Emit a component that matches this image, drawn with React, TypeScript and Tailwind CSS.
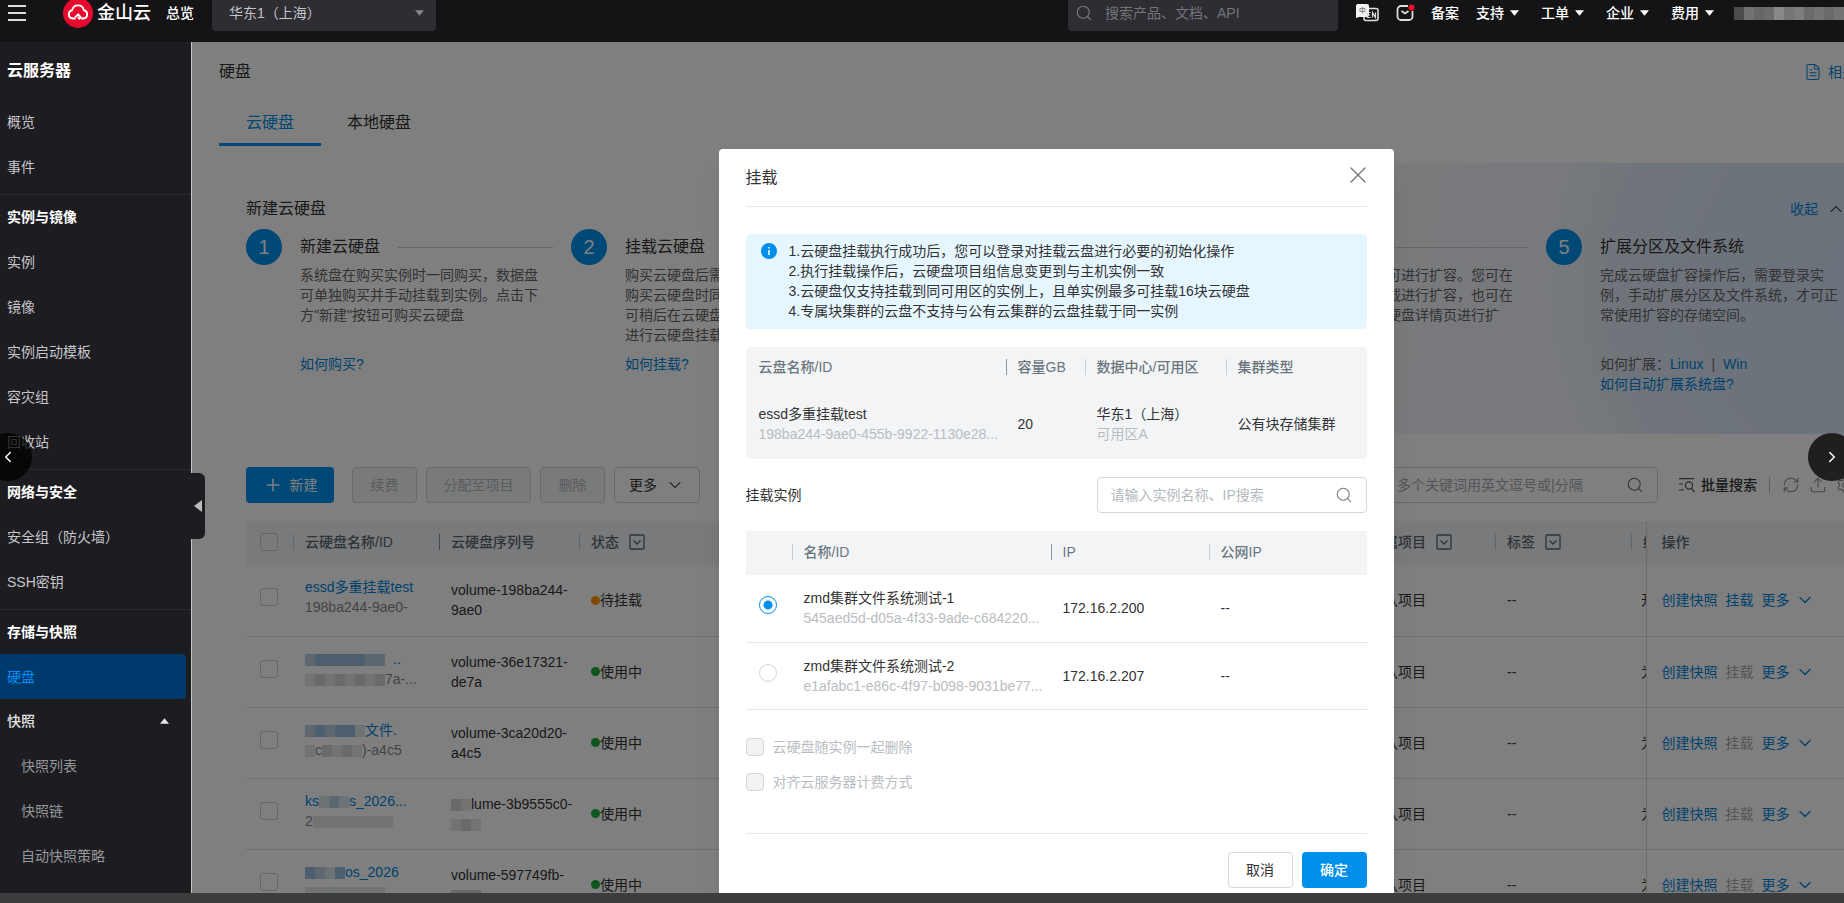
import { useState } from "react";
import type { ReactNode } from "react";
import {
  ChevronDown,
  ChevronLeft,
  ChevronRight,
  ChevronUp,
  FileText,
  Plus,
  Search,
  Upload,
  RefreshCw,
  Settings,
  X,
} from "lucide-react";

const menu = [
  { title: "实例与镜像", items: ["实例", "镜像", "实例启动模板", "容灾组", "回收站"] },
  { title: "网络与安全", items: ["安全组（防火墙）", "SSH密钥"] },
  { title: "存储与快照", items: ["硬盘"] },
];

const steps: { title: string; lines: string[]; links?: ReactNode }[] = [
  {
    title: "新建云硬盘",
    lines: ["系统盘在购买实例时一同购买，数据盘", "可单独购买并手动挂载到实例。点击下", "方\"新建\"按钮可购买云硬盘"],
    links: <a href="#" className="text-[#0084dc]">如何购买?</a>,
  },
  {
    title: "挂载云硬盘",
    lines: ["购买云硬盘后需要挂载", "购买云硬盘时同时选择", "可稍后在云硬盘列表页", "进行云硬盘挂载操作"],
    links: <a href="#" className="text-[#0084dc]">如何挂载?</a>,
  },
  { title: "初始化", lines: [] },
  {
    title: "扩容",
    lines: ["若硬盘空间不足，可进行扩容。您可在", "云硬盘列表选择卸载进行扩容，也可在", "快照列表页或者云硬盘详情页进行扩"],
  },
  {
    title: "扩展分区及文件系统",
    lines: ["完成云硬盘扩容操作后，需要登录实", "例，手动扩展分区及文件系统，才可正", "常使用扩容的存储空间。"],
    links: (
      <>
        <div>
          如何扩展：<a href="#" className="text-[#0084dc]">Linux</a>
          <span className="mx-2">|</span>
          <a href="#" className="text-[#0084dc]">Win</a>
        </div>
        <a href="#" className="text-[#0084dc]">如何自动扩展系统盘?</a>
      </>
    ),
  },
];

// Masked parts of a name, one coloured block per entry
function Mosaic({ blocks }: { blocks: string[] }) {
  return (
    <span className="inline-flex align-middle">
      {blocks.map((b, i) => (
        <i key={i} className={`block h-3 w-[10px] ${b}`} />
      ))}
    </span>
  );
}

const B1 = "bg-[#b9cfe0]";
const B2 = "bg-[#9abfdd]";
const B3 = "bg-[#dbe4eb]";
const G1 = "bg-[#e6e6e6]";
const G2 = "bg-[#d4d4d4]";

const disks = [
  {
    name: "essd多重挂载test",
    id: "198ba244-9ae0-",
    serial: ["volume-198ba244-", "9ae0"],
    status: "待挂载",
    cut: "开",
  },
  {
    name: <><Mosaic blocks={[B1, B2, B2, B2, B2, B2, B1, B1]} /><span className="ml-2">..</span></>,
    id: <><Mosaic blocks={[G1, G2, G1, G2, G1, G2, G1, G2]} />7a-...</>,
    serial: ["volume-36e17321-", "de7a"],
    status: "使用中",
    cut: "为",
  },
  {
    name: <><Mosaic blocks={[B1, B2, B1, B2, B2, B3]} />文件.</>,
    id: <><Mosaic blocks={[G1]} />c<Mosaic blocks={[G2, G1, G2, G1]} />)-a4c5</>,
    serial: ["volume-3ca20d20-", "a4c5"],
    status: "使用中",
    cut: "为",
  },
  {
    name: <>ks<Mosaic blocks={[B3, B1, B3]} />s_2026...</>,
    id: <>2<Mosaic blocks={[G1, G1, G1, G1, G1, G1, G1, G1]} /></>,
    serial: [<><Mosaic blocks={[G2, G1]} />lume-3b9555c0-</>, <Mosaic blocks={[G1, G2, G1]} />],
    status: "使用中",
    cut: "为",
  },
  {
    name: <><Mosaic blocks={[B2, B1, B3, B2]} />os_2026</>,
    id: <Mosaic blocks={[G1, G1, B3, G1, G1, G1, G1, G1]} />,
    serial: ["volume-597749fb-", <Mosaic blocks={[G2, G2, G2]} />],
    status: "使用中",
    cut: "为",
  },
];

const instances = [
  { name: "zmd集群文件系统测试-1", id: "545aed5d-d05a-4f33-9ade-c684220...", ip: "172.16.2.200" },
  { name: "zmd集群文件系统测试-2", id: "e1afabc1-e86c-4f97-b098-9031be77...", ip: "172.16.2.207" },
];

function Caret({ className = "" }: { className?: string }) {
  return (
    <svg viewBox="0 0 10 6" className={`h-[6px] w-[9px] ${className}`} fill="currentColor">
      <path d="M0 0h10L5 6z" />
    </svg>
  );
}

function FilterIcon() {
  return (
    <svg viewBox="0 0 16 16" className="ml-[10px] inline size-4 align-middle" fill="none" stroke="#5c6670" strokeWidth="1.3">
      <rect x="1" y="1" width="14" height="14" rx="1" />
      <path d="M4.5 6.5 8 10l3.5-3.5" />
    </svg>
  );
}

function Th({ children, first, strong }: { children?: ReactNode; first?: boolean; strong?: boolean }) {
  return (
    <th className="whitespace-nowrap p-0 pb-[2px] text-left font-medium">
      <div className={first ? "pl-[13px]" : `flex h-4 items-center border-l pl-[11px] ${strong ? "border-[#8c959c]" : "border-[#c9ced3]"}`}>
        {children}
      </div>
    </th>
  );
}

function TopBar() {
  return (
    <header className="h-[42px] shrink-0 overflow-hidden bg-[#141416] text-sm text-white">
      <div className="flex h-[26px] items-center">
        <button aria-label="菜单" className="ml-2 flex w-[18px] flex-col gap-[5px]">
          <i className="h-[2px] w-full bg-white/85" />
          <i className="h-[2px] w-full bg-white/85" />
          <i className="h-[2px] w-full bg-white/85" />
        </button>
        <a href="#" className="ml-[37px] flex items-center gap-1">
          <svg viewBox="0 0 30 30" className="size-[30px]">
            <circle cx="15" cy="15" r="15" fill="#e60a2e" />
            <path
              d="M12.5 20.5H9.8a4.2 4.2 0 0 1-.6-8.3 5.9 5.9 0 0 1 11.6 0 4.2 4.2 0 0 1-.6 8.3h-1.4l-3.6-4.2-3.2 3.2M17 21.5l-2-2.3"
              fill="none"
              stroke="#fff"
              strokeWidth="1.9"
              strokeLinejoin="round"
            />
          </svg>
          <span className="text-lg font-medium">金山云</span>
        </a>
        <a href="#" className="ml-[15px] font-medium">总览</a>
        <div className="relative ml-[18px] w-56">
          <select aria-label="地域" className="h-9 w-full appearance-none rounded bg-[#2d2d33] px-[17px] text-sm text-[#c4c4c8]">
            <option>华东1（上海）</option>
          </select>
          <Caret className="pointer-events-none absolute right-3 top-[15px] text-[#85858b]" />
        </div>
        <div className="relative ml-auto w-[270px]">
          <Search className="absolute left-[7px] top-[9px] size-[18px] text-[#74747a]" strokeWidth={1.5} />
          <input
            aria-label="搜索"
            placeholder="搜索产品、文档、API"
            className="h-9 w-full rounded bg-[#2d2d33] pl-[37px] text-sm placeholder:text-[#74747a]"
          />
        </div>
        <button aria-label="语言" className="ml-[18px]">
          <svg viewBox="0 0 23 18" className="h-[18px] w-[23px]">
            <rect x="8" y="4.500" width="14" height="12" rx="2" fill="#141416" stroke="#ddd" strokeWidth="1.6" />
            <path d="M2 0h9a2 2 0 0 1 2 2v9a2 2 0 0 1-2 2H3l-3 1V2a2 2 0 0 1 2-2z" fill="#f2f2f2" />
            <path d="M4 4.500h5v3H4zM6.500 3v6.500" fill="none" stroke="#888" />
            <path d="M14.500 8.500h-3v5h3M11.500 11h2.500M16.500 13.500v-5l3 5v-5" fill="none" stroke="#ddd" strokeWidth="1.200" />
          </svg>
        </button>
        <button aria-label="消息" className="ml-[17px]">
          <svg viewBox="0 0 19 18" className="h-[18px] w-[19px]">
            <path d="M12 2H5a3.500 3.500 0 0 0-3.500 3.500v7A3.500 3.500 0 0 0 5 16h8a3.500 3.500 0 0 0 3.500-3.500V7" fill="none" stroke="#ddd" strokeWidth="1.800" />
            <path d="m5.500 7 3.500 2.500L12.500 7" fill="none" stroke="#ddd" strokeWidth="1.800" />
            <circle cx="15.500" cy="3.500" r="3" fill="#f5101f" />
          </svg>
        </button>
        <a href="#" className="ml-4 font-medium">备案</a>
        {["支持", "工单", "企业", "费用"].map((t, i) => (
          <button key={t} className={`flex items-center gap-[6px] font-medium ${i ? "ml-[22px]" : "ml-[17px]"}`}>
            {t}
            <Caret />
          </button>
        ))}
        <div className="ml-5 flex opacity-80">
          {["bg-[#5b5b5e]", "bg-[#8a8a8c]", "bg-[#7c7c7f]", "bg-[#838385]", "bg-[#a5a5a7]", "bg-[#8f8f92]", "bg-[#98989a]", "bg-[#808083]", "bg-[#8c8c8e]", "bg-[#808083]", "bg-[#8c8c8e]"].map((c, i) => (
            <i key={i} className={`h-[13px] w-[10px] ${c}`} />
          ))}
        </div>
      </div>
    </header>
  );
}

function Sidebar() {
  const item = "flex h-[45px] items-center pl-[7px] text-[#c6c6ca]";
  return (
    <aside className="relative w-[191px] shrink-0 bg-[#1c1c21] text-sm">
      <h2 className="flex h-[57px] items-center pl-[7px] text-base font-bold text-white">云服务器</h2>
      <a href="#" className={item}>概览</a>
      <a href="#" className={item}>事件</a>
      {menu.map((group) => (
        <div key={group.title} className="mt-[5px] border-t border-[#2a2a2f]">
          <h3 className="flex h-11 items-center pl-[7px] font-bold text-white">{group.title}</h3>
          {group.items.map((name) =>
            name === "硬盘" ? (
              <a key={name} href="#" className="mr-[5px] flex h-[45px] items-center rounded-r bg-[#003a6c] pl-[7px] text-[#0090f5]">
                {name}
              </a>
            ) : (
              <a key={name} href="#" className={item}>{name}</a>
            )
          )}
        </div>
      ))}
      <button className="flex h-11 w-full items-center justify-between pl-[7px] pr-[22px] font-medium text-[#e4e4e6]">
        快照
        <Caret className="rotate-180" />
      </button>
      {["快照列表", "快照链", "自动快照策略"].map((t) => (
        <a key={t} href="#" className="flex h-[45px] items-center pl-[21px] text-[#96969a]">{t}</a>
      ))}
    </aside>
  );
}

function Steps() {
  return (
    <section className="mt-[17px] h-[271px] bg-[radial-gradient(circle_at_100%_45%,#d3e2f5_0,#dfe9f6_260px,transparent_340px),linear-gradient(100deg,#fff_30%,#eff3f8_75%)] pl-[27px] pt-[34px]">
      <div className="flex h-6 items-center justify-between pr-[38px]">
        <h2 className="text-base">新建云硬盘</h2>
        <button className="flex items-center gap-2 text-sm text-[#0084dc]">
          收起
          <ChevronUp className="size-5 text-[#555]" strokeWidth={1.5} />
        </button>
      </div>
      <div className="mt-2 flex">
        {steps.map((s, i) => (
          <div key={s.title} className="flex w-[325px] shrink-0 gap-[18px]">
            <div className="flex size-9 shrink-0 items-center justify-center rounded-full bg-[#0090eb] text-xl text-white">
              {i + 1}
            </div>
            <div className="min-w-0 flex-1">
              <div className="flex h-9 items-center">
                <h3 className="whitespace-nowrap text-base">{s.title}</h3>
                {i < 4 && <i className="mx-[18px] h-px flex-1 bg-[#ccc]" />}
              </div>
              <div className="h-[89px] text-sm text-[#666]">
                {s.lines.map((l) => (
                  <p key={l} className="whitespace-nowrap">{l}</p>
                ))}
              </div>
              <div className="text-sm text-[#666]">{s.links}</div>
            </div>
          </div>
        ))}
      </div>
    </section>
  );
}

function Toolbar() {
  const disabled = "h-9 rounded border border-[#d0d5d8] bg-[#f2f4f5] text-[#b4b9bd]";
  return (
    <div className="flex items-center pl-[27px] pr-[30px] pt-[33px] text-sm">
      <button className="flex h-9 w-[88px] items-center justify-center gap-[7px] rounded bg-[#0090eb] text-white">
        <Plus className="size-5" strokeWidth={1.8} />
        新建
      </button>
      <button disabled className={`ml-[18px] w-[65px] ${disabled}`}>续费</button>
      <button disabled className={`ml-[9px] w-[105px] ${disabled}`}>分配至项目</button>
      <button disabled className={`ml-[9px] w-[65px] ${disabled}`}>删除</button>
      <button className="ml-[9px] flex h-9 w-[86px] items-center justify-center gap-2 rounded border border-[#ccd1d5]">
        更多
        <ChevronDown className="size-5 text-[#555]" strokeWidth={1.3} />
      </button>
      <div className="relative ml-auto w-[427px]">
        <input
          aria-label="搜索云硬盘"
          placeholder="支持名称、序列号搜索，多个关键词用英文逗号或|分隔"
          className="h-9 w-full rounded border border-[#ccd1d5] pl-[11px] pr-10 placeholder:text-[#a6abb0]"
        />
        <Search className="absolute right-[14px] top-[9px] size-[18px] text-[#666]" strokeWidth={1.4} />
      </div>
      <button className="ml-[21px] flex items-center gap-[6px] font-medium">
        <svg viewBox="0 0 16 16" className="size-4" fill="none" stroke="#555" strokeWidth="1.200">
          <path d="M0 1.700h15M0 7h4M0 13h5" />
          <circle cx="10" cy="8.500" r="3.600" />
          <path d="m12.500 11.500 3 3.500" />
        </svg>
        批量搜索
      </button>
      <i className="mx-3 h-4 w-px bg-[#bbb]" />
      <div className="flex gap-[9px] text-[#888]">
        <button aria-label="刷新"><RefreshCw className="size-[18px]" strokeWidth={1.4} /></button>
        <button aria-label="导出"><Upload className="size-[18px]" strokeWidth={1.4} /></button>
        <button aria-label="设置"><Settings className="size-[18px]" strokeWidth={1.4} /></button>
      </div>
    </div>
  );
}

function DiskTable() {
  const box = "block size-[18px] appearance-none rounded-[3px] border border-[#c9cdd1]";
  return (
    <div className="mt-[18px] px-[27px]">
      <table className="w-full table-fixed text-sm">
        <colgroup>
          <col className="w-[47px]" />
          <col className="w-[146px]" />
          <col className="w-[140px]" />
          <col />
          <col className="w-[137px]" />
          <col className="w-[136px]" />
          <col className="w-[15px]" />
          <col className="w-[211px]" />
        </colgroup>
        <thead className="h-11 bg-[#f2f4f6] text-[#5c6670]">
          <tr>
            <th className="p-0 pb-[2px] pl-[14px]">
              <input type="checkbox" aria-label="全选" className={box} />
            </th>
            <Th>云硬盘名称/ID</Th>
            <Th strong>云硬盘序列号</Th>
            <Th>状态<FilterIcon /></Th>
            <Th>所属项目<FilterIcon /></Th>
            <Th>标签<FilterIcon /></Th>
            <th className="overflow-hidden p-0 pb-[2px]">
              <div className="h-4 w-[15px] overflow-hidden border-l border-[#c9ced3] pl-[11px] leading-4">维</div>
            </th>
            <th className="border-l border-[#d4d7da] p-0 pb-[2px] pl-[15px] text-left font-medium">操作</th>
          </tr>
        </thead>
        <tbody>
          {disks.map((d, i) => (
            <tr key={i} className="h-[71px] border-b border-[#dcdfe2]">
              <td className="p-0 pb-[6px] pl-[14px]">
                <input type="checkbox" aria-label="选择云硬盘" className={box} />
              </td>
              <td className="whitespace-nowrap p-0 pb-[6px] pl-3">
                <a href="#" className="block h-5 text-[#0084dc]">{d.name}</a>
                <div className="h-5 text-[#888]">{d.id}</div>
              </td>
              <td className="whitespace-nowrap p-0 pl-3">
                <div className="h-5">{d.serial[0]}</div>
                <div className="h-5">{d.serial[1]}</div>
              </td>
              <td className="p-0 pl-3">
                <span className="flex items-center">
                  <i className={`size-[9px] rounded-full ${i === 0 ? "bg-[#ff9500]" : "bg-[#1fab3c]"}`} />
                  {d.status}
                </span>
              </td>
              <td className="p-0 pl-3">默认项目</td>
              <td className="p-0 pl-3">--</td>
              <td className="p-0"><div className="w-[15px] overflow-hidden whitespace-nowrap pl-[10px]">{d.cut}</div></td>
              <td className="border-l border-[#d4d7da] p-0 pl-[15px]">
                <div className="flex items-center gap-2 text-[#0084dc]">
                  <button>创建快照</button>
                  <button disabled={i > 0} className="disabled:text-[#aaa]">挂载</button>
                  <button className="flex items-center gap-[5px]">
                    更多
                    <ChevronDown className="size-5" strokeWidth={1.5} />
                  </button>
                </div>
              </td>
            </tr>
          ))}
        </tbody>
      </table>
    </div>
  );
}

function MountDialog() {
  const [selected, setSelected] = useState(0);

  return (
    <div role="dialog" aria-label="挂载" className="mt-[107px] flex w-[675px] flex-col rounded-t bg-white px-[27px] text-sm text-[#333] shadow-xl">
      <div className="flex h-[58px] shrink-0 items-center justify-between border-b border-[#e6e9eb]">
        <h2 className="text-base">挂载</h2>
        <button aria-label="关闭" className="-mr-[5px] pb-[5px] text-[#777]"><X className="size-7" strokeWidth={1.2} /></button>
      </div>

      <div className="mt-[27px] flex gap-3 rounded bg-[#e6f6ff] px-[15px] pt-[7px] pb-2">
        <svg viewBox="0 0 16 16" className="mt-[2px] size-4 shrink-0">
          <circle cx="8" cy="8" r="8" fill="#0090eb" />
          <path d="M8 4v1.600M8 7v5" stroke="#fff" strokeWidth="1.500" />
        </svg>
        <div>
          <p>1.云硬盘挂载执行成功后，您可以登录对挂载云盘进行必要的初始化操作</p>
          <p>2.执行挂载操作后，云硬盘项目组信息变更到与主机实例一致</p>
          <p>3.云硬盘仅支持挂载到同可用区的实例上，且单实例最多可挂载16块云硬盘</p>
          <p>4.专属块集群的云盘不支持与公有云集群的云盘挂载于同一实例</p>
        </div>
      </div>

      <table className="mt-[18px] w-full table-fixed rounded bg-[#f2f4f6]">
        <colgroup>
          <col className="w-[260px]" />
          <col className="w-[79px]" />
          <col className="w-[141px]" />
          <col />
        </colgroup>
        <thead className="h-[42px] text-[#6b757d]">
          <tr>
            <Th first>云盘名称/ID</Th>
            <Th strong>容量GB</Th>
            <Th>数据中心/可用区</Th>
            <Th>集群类型</Th>
          </tr>
        </thead>
        <tbody>
          <tr className="h-[70px]">
            <td className="p-0 pl-[13px]">
              essd多重挂载test
              <div className="text-[#b9bdc1]">198ba244-9ae0-455b-9922-1130e28...</div>
            </td>
            <td className="p-0 pl-3">20</td>
            <td className="p-0 pl-3">
              华东1（上海）
              <div className="text-[#b9bdc1]">可用区A</div>
            </td>
            <td className="p-0 pl-3">公有块存储集群</td>
          </tr>
        </tbody>
      </table>

      <div className="mt-[18px] flex items-center justify-between">
        <label htmlFor="instance-search">挂载实例</label>
        <div className="relative w-[270px]">
          <input
            id="instance-search"
            placeholder="请输入实例名称、IP搜索"
            className="h-9 w-full rounded border border-[#d5d9dc] pl-[13px] placeholder:text-[#b4b9bd]"
          />
          <Search className="absolute right-[14px] top-[9px] size-[18px] text-[#777]" strokeWidth={1.4} />
        </div>
      </div>

      <table className="mt-[18px] w-full table-fixed">
        <colgroup>
          <col className="w-[46px]" />
          <col className="w-[259px]" />
          <col className="w-[158px]" />
          <col />
        </colgroup>
        <thead className="h-11 bg-[#f2f4f6] text-[#6b757d]">
          <tr>
            <th className="p-0" />
            <Th>名称/ID</Th>
            <Th strong>IP</Th>
            <Th>公网IP</Th>
          </tr>
        </thead>
        <tbody>
          {instances.map((ins, i) => (
            <tr key={ins.id} className="h-[67px] border-b border-[#e3e6e8]">
              <td className="p-0 pb-[6px] pl-[13px]">
                <input
                  type="radio"
                  name="instance"
                  aria-label={ins.name}
                  checked={selected === i}
                  onChange={() => setSelected(i)}
                  className="block size-[18px] appearance-none rounded-full border border-[#d0d4d8] checked:border-[#0090eb] checked:bg-[radial-gradient(circle,#0090eb_0,#0090eb_4px,#fff_5px)]"
                />
              </td>
              <td className="p-0 pl-3">
                {ins.name}
                <div className="text-[#b9bdc1]">{ins.id}</div>
              </td>
              <td className="p-0 pl-3">{ins.ip}</td>
              <td className="p-0 pl-3">--</td>
            </tr>
          ))}
        </tbody>
      </table>

      <div className="mt-[27px] flex flex-col gap-[15px] text-[#b9bdc1]">
        {["云硬盘随实例一起删除", "对齐云服务器计费方式"].map((t) => (
          <label key={t} className="flex items-center gap-[9px]">
            <input type="checkbox" disabled className="size-[18px] appearance-none rounded border border-[#d3d7da] bg-[#f0f2f3]" />
            {t}
          </label>
        ))}
      </div>

      <div className="mt-auto flex shrink-0 justify-end gap-[9px] border-t border-[#e6e9eb] pt-[18px] pb-[5px]">
        <button className="h-9 w-[65px] rounded border border-[#d5d9dc]">取消</button>
        <button className="h-9 w-[65px] rounded bg-[#0090eb] font-medium text-white">确定</button>
      </div>
    </div>
  );
}

export default function App() {
  return (
    <div className="flex h-screen flex-col overflow-hidden bg-[#3d3d3d] font-['Liberation_Sans','Noto_Sans_CJK_SC',sans-serif]">
      <TopBar />
      <div className="relative flex min-h-0 flex-1">
        <Sidebar />
        <main className="relative min-w-0 flex-1 overflow-hidden border-l border-[#c4c4c4] bg-white text-[#333]">
          {/* the console page is wider than the viewport, the right edge is cut off */}
          <div className="-mr-10 pl-[27px]">
            <div className="flex h-[60px] items-center justify-between">
              <h1 className="text-base">硬盘</h1>
              <a href="#" className="flex items-center gap-[6px] text-sm text-[#0084dc]">
                <FileText className="size-[18px]" strokeWidth={1.4} />
                相关文档
              </a>
            </div>
            <nav className="flex h-11 text-base">
              <button className="border-b-[3px] border-[#0090eb] px-[27px] text-[#0090eb]">云硬盘</button>
              <button className="border-b-[3px] border-transparent px-[26px]">本地硬盘</button>
            </nav>
            <Steps />
            <Toolbar />
            <DiskTable />
          </div>
          <div className="absolute inset-0 flex justify-center bg-black/50 pl-[76px]">
            <MountDialog />
          </div>
        </main>

        <button aria-label="收起菜单" className="absolute left-[190px] top-[431px] flex h-[66px] w-[15px] items-center justify-center rounded-r-md bg-[#1c1c21]">
          <svg viewBox="0 0 8 12" className="h-3 w-2" fill="#bbb">
            <path d="M8 0v12L0 6z" />
          </svg>
        </button>
        <button aria-label="上一张" className="absolute -left-4 top-[391px] flex size-12 items-center justify-center rounded-full bg-black/75 text-white">
          <ChevronLeft className="size-[18px]" />
        </button>
        <button aria-label="下一张" className="absolute -right-3 top-[391px] flex size-12 items-center justify-center rounded-full bg-[#1f1f1f] text-white">
          <ChevronRight className="size-[18px]" />
        </button>
      </div>
      <div className="h-[10px] shrink-0" />
    </div>
  );
}
